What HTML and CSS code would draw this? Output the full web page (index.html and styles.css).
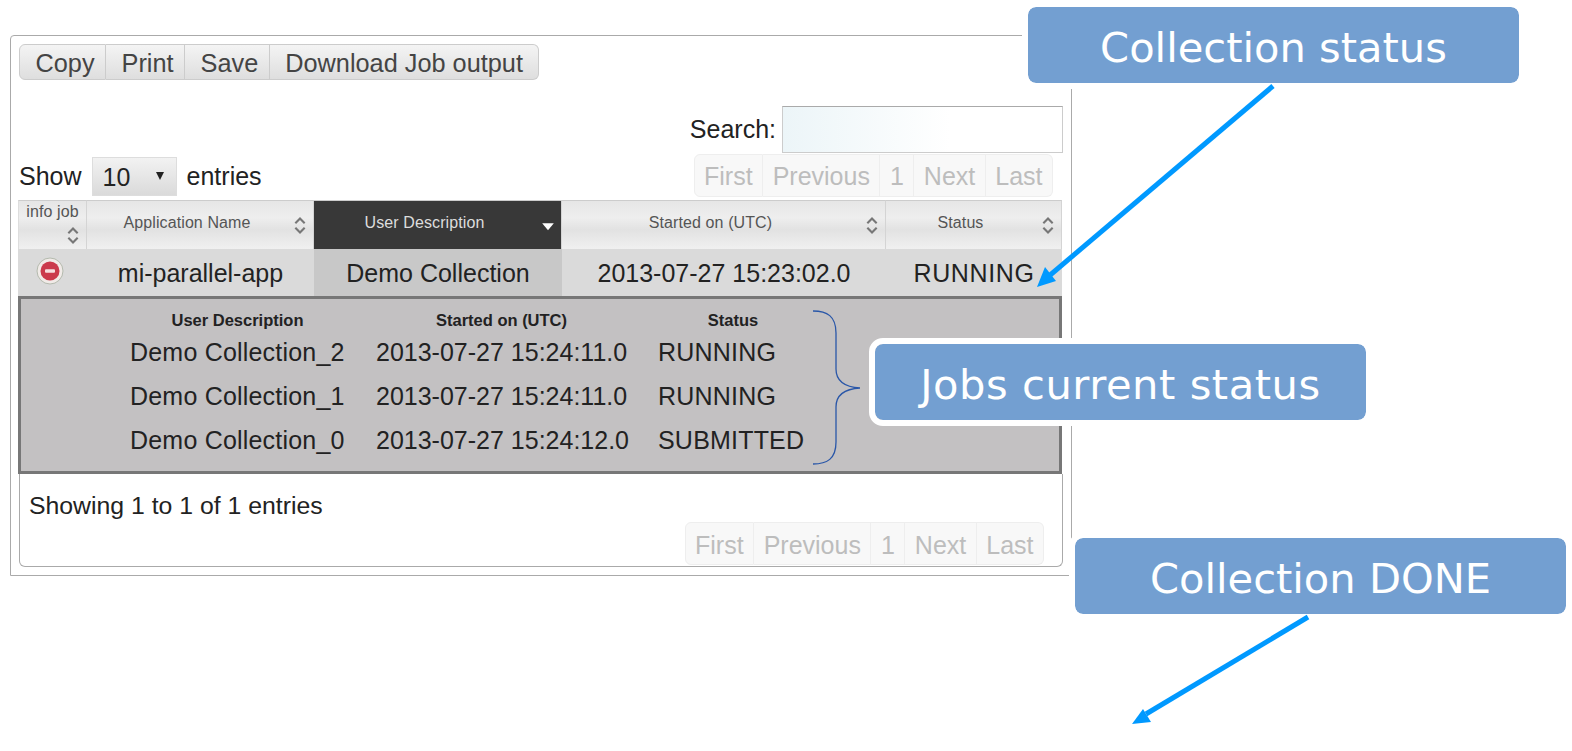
FILE: index.html
```html
<!DOCTYPE html>
<html lang="en">
<head>
  <meta charset="UTF-8">
  <title>Job status</title>
  <link rel="stylesheet" href="styles.css">
</head>
<body>
  <div class="panel">
    <div class="toolbar">
      <button class="tool-btn">Copy</button>
      <button class="tool-btn">Print</button>
      <button class="tool-btn">Save</button>
      <button class="tool-btn">Download Job output</button>
    </div>

    <div class="search-row">
      <label for="search">Search:</label>
      <input type="text" id="search">
    </div>

    <div class="controls-row">
      <div class="length-control">
        <span>Show</span>
        <div class="length-select">
          <select>
            <option>10</option>
          </select>
        </div>
        <span>entries</span>
      </div>
      <div class="pager">
        <span>First</span><span>Previous</span><span>1</span><span>Next</span><span>Last</span>
      </div>
    </div>

    <table class="jobs">
      <colgroup>
        <col class="col-info">
        <col class="col-app">
        <col class="col-desc">
        <col class="col-started">
        <col class="col-status">
      </colgroup>
      <thead>
        <tr>
          <th class="th-info">
            <div class="th-stack">
              <span>info job</span>
              <svg class="sort-icon" viewBox="0 0 12 18"><path d="M2 7l4-4 4 4M2 11l4 4 4-4"/></svg>
            </div>
          </th>
          <th>
            <div class="th-inner">
              <span>Application Name</span>
              <svg class="sort-icon" viewBox="0 0 12 18"><path d="M2 7l4-4 4 4M2 11l4 4 4-4"/></svg>
            </div>
          </th>
          <th class="sorted">
            <div class="th-inner">
              <span>User Description</span>
              <svg class="sort-down" viewBox="0 0 12 18"><path d="M1 7h10l-5 6z"/></svg>
            </div>
          </th>
          <th>
            <div class="th-inner">
              <span>Started on (UTC)</span>
              <svg class="sort-icon" viewBox="0 0 12 18"><path d="M2 7l4-4 4 4M2 11l4 4 4-4"/></svg>
            </div>
          </th>
          <th>
            <div class="th-inner">
              <span>Status</span>
              <svg class="sort-icon" viewBox="0 0 12 18"><path d="M2 7l4-4 4 4M2 11l4 4 4-4"/></svg>
            </div>
          </th>
        </tr>
      </thead>
      <tbody>
        <tr class="job-row">
          <td class="td-info">
            <svg class="remove-icon" viewBox="0 0 28 28">
              <circle cx="14" cy="14" r="13" fill="#f1ebe8" stroke="#b4baae"/>
              <circle cx="14" cy="14" r="9.5" fill="#cb3a4c"/>
              <rect x="9" y="12.2" width="10" height="3.6" rx="1" fill="#f6dfe0"/>
            </svg>
          </td>
          <td>mi-parallel-app</td>
          <td class="td-sorted">Demo Collection</td>
          <td>2013-07-27 15:23:02.0</td>
          <td class="td-status">RUNNING</td>
        </tr>
        <tr>
          <td colspan="5" class="detail">
            <div class="detail-grid">
              <div class="detail-head">User Description</div>
              <div class="detail-head">Started on (UTC)</div>
              <div class="detail-head">Status</div>

              <div class="detail-wide">Demo Collection_2</div>
              <div>2013-07-27 15:24:11.0</div>
              <div class="detail-wide">RUNNING</div>

              <div class="detail-wide">Demo Collection_1</div>
              <div>2013-07-27 15:24:11.0</div>
              <div class="detail-wide">RUNNING</div>

              <div class="detail-wide">Demo Collection_0</div>
              <div>2013-07-27 15:24:12.0</div>
              <div class="detail-wide">SUBMITTED</div>
            </div>
          </td>
        </tr>
      </tbody>
    </table>

    <div class="table-footer">
      <div class="info">Showing 1 to 1 of 1 entries</div>
      <div class="pager pager-bottom">
        <span>First</span><span>Previous</span><span>1</span><span>Next</span><span>Last</span>
      </div>
    </div>
  </div>

  <div class="callout callout-collection">Collection status</div>
  <div class="callout callout-jobs">Jobs current status</div>
  <div class="callout callout-done">Collection DONE</div>

  <!-- arrows and the brace drawn over the screenshot -->
  <svg class="overlay" viewBox="0 0 1572 751">
    <path class="brace" d="M813 311c14 0 23 5 23 22v36c0 11 8 18 24 19c-16 1-24 8-24 19v35c0 17-9 22-23 22"/>
    <line class="arrow-line" x1="1273" y1="86" x2="1049" y2="276"/>
    <path class="arrow-head" d="M1037 287l8-20 11 14z"/>
    <line class="arrow-line" x1="1308" y1="617" x2="1146" y2="714"/>
    <path class="arrow-head" d="M1132 724l11-15 8 13z"/>
  </svg>
</body>
</html>
```

FILE: styles.css
```css
/* General Styles */
html, body {
  height: 100%;
}

body {
  margin: 0;
  background: #fff;
  color: #222;
  font-family: "Liberation Sans", Arial, sans-serif;
  font-size: 25px;
  overflow: hidden;
}

/* Outer panel */
.panel {
  box-sizing: border-box;
  display: flex;
  flex-direction: column;
  width: 1062px;
  height: 541px;
  margin: 35px 0 0 10px;
  padding: 8px 9px 8px 8px;
  border: 1px solid #aaa;
  border-top-left-radius: 4px;
}

/* Buttons */
.toolbar {
  display: flex;
  align-self: flex-start;
  height: 36px;
}

.tool-btn {
  padding: 3px 10.5px 0 15.5px;
  border: 1px solid #ccc;
  border-left: 0;
  background: linear-gradient(#f4f4f4, #dedede);
  color: #444;
  font: inherit;
  font-size: 25.3px;
}

.tool-btn:first-child {
  border-left: 1px solid #ccc;
  border-radius: 6px 0 0 6px;
}

.tool-btn:last-child {
  padding-right: 15px;
  border-radius: 0 6px 6px 0;
}

/* Search */
.search-row {
  display: flex;
  justify-content: flex-end;
  align-items: center;
  gap: 6px;
  margin: 26px -1px 0 0;
}

.search-row input {
  box-sizing: border-box;
  width: 281px;
  height: 47px;
  border: 1px solid #ccc;
  border-top-color: #aaa;
  background: linear-gradient(90deg, #ecf5f8, #fff 60%);
}

/* Length menu and pager */
.controls-row {
  display: flex;
  justify-content: space-between;
  align-items: center;
  height: 44px;
  margin-bottom: 3px;
}

.length-control {
  display: flex;
  align-items: center;
  gap: 10px;
  margin-top: 3px;
}

.length-select {
  position: relative;
}

.length-select select {
  display: block;
  width: 85px;
  height: 39px;
  padding: 0 10px;
  border: 1px solid #ddd;
  background: linear-gradient(#f2f2f2, #dadada);
  color: #222;
  font: inherit;
  appearance: none;
}

.length-select::after {
  content: "";
  position: absolute;
  top: 15px;
  right: 13px;
  border-top: 8px solid #222;
  border-left: 4px solid transparent;
  border-right: 4px solid transparent;
}

.pager {
  display: flex;
  height: 43px;
  margin-right: 9px;
  color: #bdbdbd;
}

.pager span {
  display: flex;
  align-items: center;
  padding: 3px 9.5px 0;
  border: 1px solid #eee;
  border-left: 0;
  background: #f8f8f8;
}

.pager span:first-child {
  border-left: 1px solid #eee;
  border-radius: 6px 0 0 6px;
}

.pager span:last-child {
  border-radius: 0 6px 6px 0;
}

/* Table */
.jobs {
  width: 1044px;
  margin-left: -1px;
  border-collapse: separate;
  border-spacing: 0;
  table-layout: fixed;
}

.col-info { width: 69px; }
.col-app { width: 227px; }
.col-desc { width: 248px; }
.col-started { width: 324px; }
.col-status { width: 176px; }

.jobs th {
  box-sizing: border-box;
  height: 49px;
  padding: 0;
  border-top: 1px solid #ccc;
  border-right: 1px solid #d4d4d4;
  background: linear-gradient(#e6e6e6, #eeeeee 35%, #e2e2e2 60%, #f0f0f0);
  color: #555;
  font-size: 16px;
  font-weight: normal;
  letter-spacing: .1px;
}

.jobs th:first-child {
  border-left: 1px solid #ddd;
}

.jobs th.sorted {
  background: #383838;
  color: #ddd;
}

.th-inner {
  display: flex;
  align-items: center;
  height: 46px;
  padding: 0 6px 0 0;
  box-sizing: border-box;
}

.th-inner span {
  flex: 1;
  padding-bottom: 5px;
  text-align: center;
}

.th-stack {
  display: flex;
  flex-direction: column;
  align-items: flex-end;
  height: 48px;
  padding: 2px 6px 0;
  box-sizing: border-box;
}

.th-stack span {
  align-self: center;
  line-height: 18px;
}

.sort-icon {
  width: 14px;
  height: 21px;
  margin-left: 6px;
}

.th-stack .sort-icon {
  margin-top: 4px;
}

.sort-icon path {
  fill: none;
  stroke: #777;
  stroke-width: 1.8;
}

.sort-down {
  width: 14px;
  height: 21px;
  margin-left: 6px;
  fill: #fff;
}

.job-row td {
  box-sizing: border-box;
  height: 47px;
  padding: 2px 0 0;
  background: #dadada;
  text-align: center;
}

.job-row td.td-sorted {
  background: #c8c8c8;
}

.job-row td.td-status {
  letter-spacing: .6px;
}

.job-row td.td-info {
  vertical-align: top;
  text-align: left;
  padding: 8px 0 0 18px;
}

.remove-icon {
  display: block;
  width: 28px;
  height: 28px;
}

/* Child rows of a collection */
.detail {
  box-sizing: border-box;
  padding: 10px 0;
  border: 3px solid #777;
  background: #c3c1c2;
}

.detail-grid {
  display: grid;
  grid-template-columns: 215px 251px 150px;
  grid-template-rows: 20px;
  grid-auto-rows: 44px;
  column-gap: 31px;
  align-items: center;
  padding-left: 109px;
  white-space: nowrap;
}

.detail-grid > div {
  padding-top: 3px;
}

.detail-grid > .detail-head {
  height: 20px;
  padding-top: 1px;
  font-size: 16.5px;
  font-weight: bold;
  line-height: 20px;
  text-align: center;
}

.detail-wide {
  letter-spacing: .2px;
}

/* Footer */
.table-footer {
  display: flex;
  flex: 1;
  flex-direction: column;
  padding: 17px 0 0 9px;
  border: 1px solid #aaa;
  border-top: 0;
  border-radius: 0 0 6px 6px;
  width: 1033px;
}

.info {
  font-size: 24.8px;
  line-height: 30px;
}

.pager-bottom {
  align-self: flex-end;
  margin-top: 1px;
  margin-right: 18px;
}

/* Annotations drawn on top */
.overlay {
  position: absolute;
  top: 0;
  left: 0;
  width: 1572px;
  height: 751px;
  pointer-events: none;
}

.brace {
  fill: none;
  stroke: #2a57a8;
  stroke-width: 1.3;
}

.arrow-line {
  stroke: #0099ff;
  stroke-width: 5;
}

.arrow-head {
  fill: #0099ff;
}

.callout {
  position: absolute;
  box-sizing: border-box;
  display: flex;
  justify-content: center;
  align-items: center;
  width: 503px;
  height: 88px;
  padding-top: 5px;
  border: 6px solid #fff;
  border-radius: 14px;
  background: #739fd1;
  background-clip: padding-box;
  color: #fff;
  font-family: "DejaVu Sans", Verdana, sans-serif;
  font-size: 41.6px;
}

.callout-collection {
  top: 1px;
  left: 1022px;
}

.callout-jobs {
  top: 338px;
  left: 869px;
  letter-spacing: .55px;
}

.callout-done {
  top: 532px;
  left: 1069px;
}
```
